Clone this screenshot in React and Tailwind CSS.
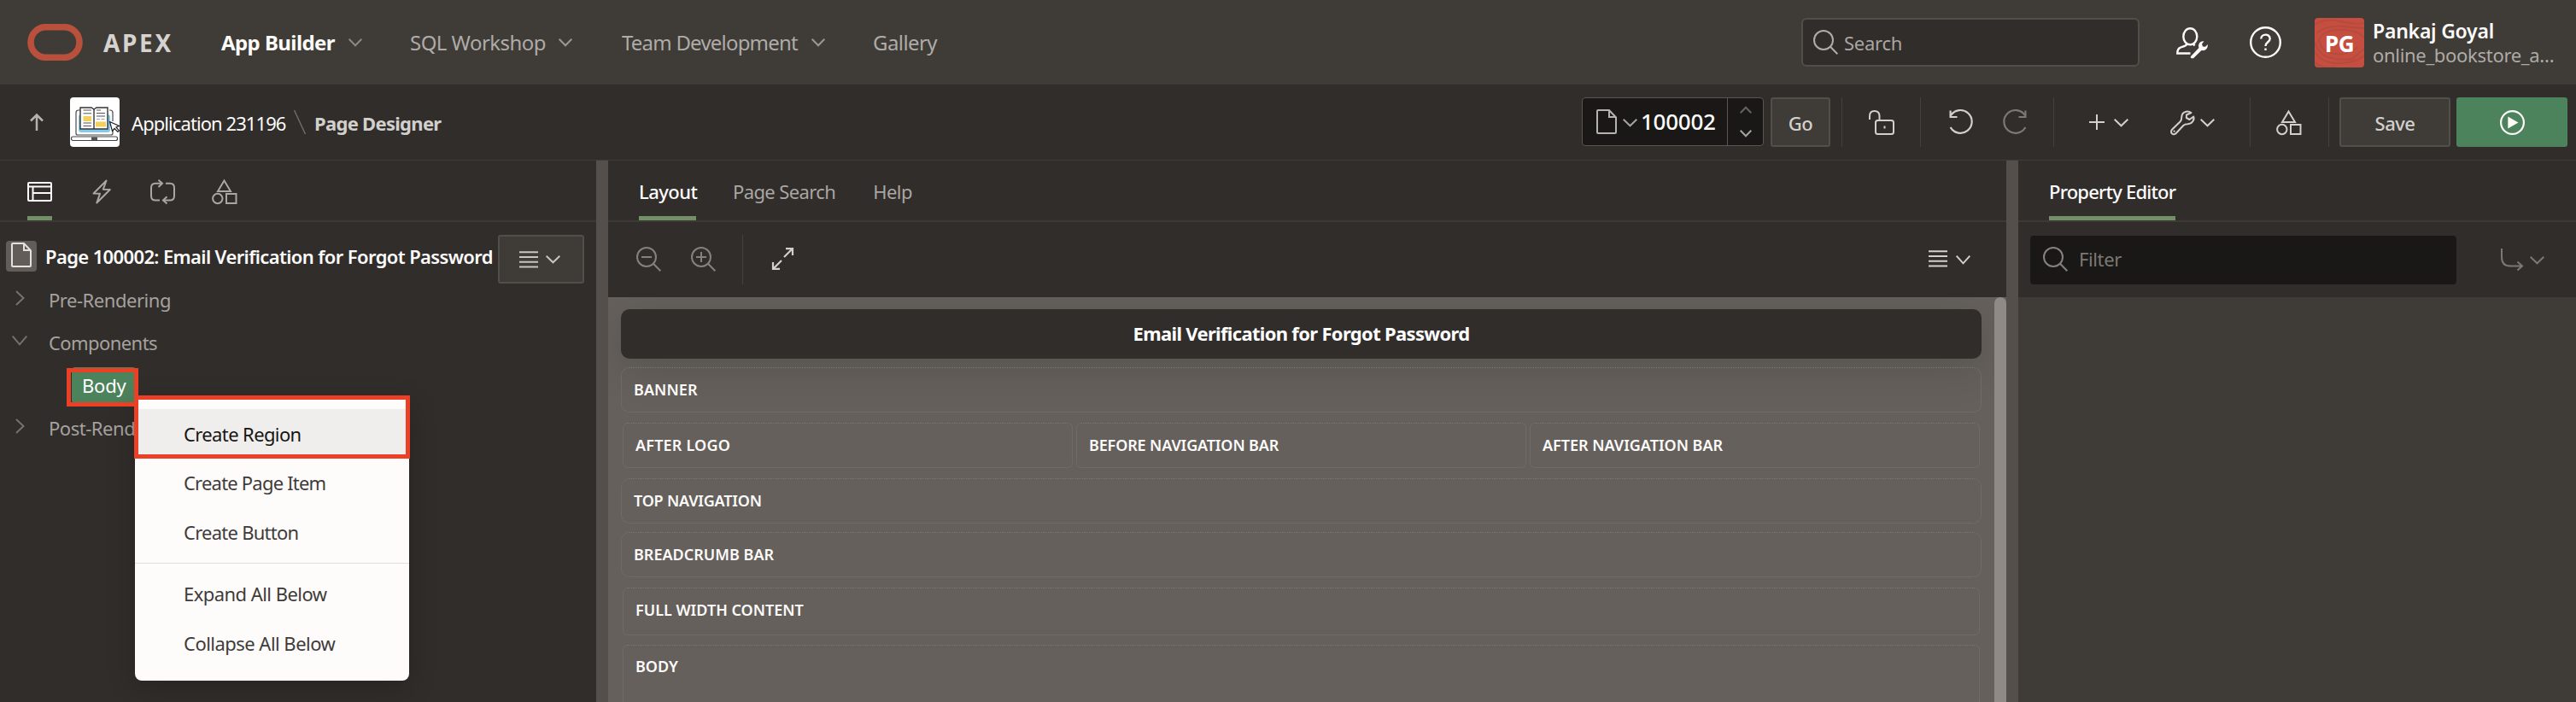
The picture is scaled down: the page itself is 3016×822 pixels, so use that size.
import React from "react";

function Icon({ w, h, sw = 2, className = "", children }) {
  return (
    <svg width={w} height={h} viewBox={`0 0 ${w} ${h}`} fill="none" stroke="currentColor" strokeWidth={sw} className={`block shrink-0 overflow-visible ${className}`}>
      {children}
    </svg>
  );
}

const ChevronDown = ({ w = 16, h = 9, sw = 2, className }) => (
  <Icon w={w} h={h} sw={sw} className={className}>
    <path d={`M0.7 0.7 L${w / 2} ${h - 0.7} L${w - 0.7} 0.7`} />
  </Icon>
);

const ChevronUp = ({ w = 14, h = 8, sw = 2, className }) => (
  <Icon w={w} h={h} sw={sw} className={className}>
    <path d={`M0.7 ${h - 0.7} L${w / 2} 0.7 L${w - 0.7} ${h - 0.7}`} />
  </Icon>
);

const ChevronRight = ({ className }) => (
  <Icon w={11} h={18} className={className}>
    <path d="M1 1 L9.5 9 L1 17" />
  </Icon>
);

const FileIcon = ({ className }) => (
  <Icon w={24} h={29} className={className}>
    <path d="M1 2 Q1 1 2 1 H15 L23 9.5 V27 Q23 28 22 28 H2 Q1 28 1 27 Z M15 1 V9 H23" />
  </Icon>
);

const SearchIcon = ({ className }) => (
  <Icon w={29} h={29} className={className}>
    <circle cx="12" cy="12" r="11" />
    <path d="M20 19.8 L28.3 28.3" />
  </Icon>
);

const ZoomIcon = ({ plus, className }) => (
  <Icon w={29} h={29} className={className}>
    <circle cx="12" cy="12" r="11" />
    <path d="M20 19.8 L28.3 28.3 M6 12 H18" />
    {plus && <path d="M12 6 V18" />}
  </Icon>
);

const ShapesIcon = ({ className }) => (
  <Icon w={30} h={29} className={className}>
    <path d="M14.5 1.5 L22 14 H7 Z" />
    <circle cx="6.8" cy="22.5" r="5.7" />
    <rect x="17" y="17" width="11.5" height="11" />
  </Icon>
);

const LinesIcon = ({ className }) => (
  <Icon w={22} h={20} className={className}>
    <path d="M0 1.3 H22 M0 7 H22 M0 12.8 H22 M0 18.6 H22" />
  </Icon>
);

const LayoutIcon = ({ className }) => (
  <Icon w={29} h={23} className={className}>
    <rect x="1" y="1" width="27" height="21" rx="1" />
    <path d="M1 5.5 H28 M6.5 5.5 V22 M6.5 13 H28" />
  </Icon>
);

const BoltIcon = ({ className }) => (
  <Icon w={22} h={29} className={className}>
    <path d="M16.5 1.5 L1.5 16.5 L9 16.8 L5.3 27.5 L20.8 12 L12.8 11.7 Z" strokeLinejoin="round" />
  </Icon>
);

const CycleIcon = ({ className }) => (
  <Icon w={29} h={29} className={className}>
    <path d="M14 4.8 H6 Q1 4.8 1 9.8 V19.5 Q1 24.5 6 24.5 H11 M18 4.8 H23 Q28 4.8 28 9.8 V19.5 Q28 24.5 23 24.5 H15.5" />
    <path d="M9.5 0.8 L14 4.8 L9.5 9 M19.5 20.3 L15 24.5 L19.5 28.5" />
  </Icon>
);

const LockIcon = ({ className }) => (
  <Icon w={30} h={29} className={className}>
    <rect x="8" y="12" width="21" height="16" rx="2.5" />
    <path d="M1 11 V7 Q1 1 6.500 1 Q12.500 1 12.500 7 V12 M18.500 18.500 V21.500" />
  </Icon>
);

const UndoIcon = ({ className }) => (
  <Icon w={28} h={29} sw={2.2} className={className}>
    <path d="M2 6.200 A13.400 13.400 0 1 1 1.600 20" />
    <path d="M1.600 0.500 V8 H9.500" />
  </Icon>
);

const PlusIcon = ({ className }) => (
  <Icon w={18} h={18} className={className}>
    <path d="M9 0 V18 M0 9 H18" />
  </Icon>
);

const WrenchIcon = ({ className }) => (
  <Icon w={29} h={29} className={className}>
    <path
      d="M24.500 3 C20 -0.200 13.500 2.200 13.300 8 C13.300 10.500 13 12 11.500 13.500 L2.200 22.500 C0.500 24.300 0.800 26.500 2 27.400 C3.300 28.600 5.500 28.300 6.800 27 L15.500 17.800 C17 16.400 18.500 16.200 20.500 16.200 C25.500 16 28.600 11.500 27.200 7.500 L22.500 11 L18.800 9 L19 5.500 Z"
      strokeLinejoin="round"
    />
    <circle cx="4.600" cy="24.700" r="0.500" strokeWidth="1.200" />
  </Icon>
);

const ExpandIcon = ({ className }) => (
  <Icon w={25} h={26} sw={2.2} className={className}>
    <path d="M14 11 L23.500 1.500 M16 1.200 H24 V9 M11 15 L1.500 24.500 M9 24.800 H1 V17" />
  </Icon>
);

const UserWrenchIcon = () => (
  <Icon w={37} h={36} sw={2.400}>
    <ellipse cx="16.300" cy="10.800" rx="8" ry="9.500" />
    <path d="M12.500 19.500 C11.500 22 8 22.500 5 23.600 C2.500 24.500 1.300 26 1.300 30.500 H16.500 M20 19.500 L21.500 21.500" />
    <path
      d="M17 34 L26.500 24 C25 19.500 28 15.800 32.500 16.300 L30 19.500 L31 22.500 L34 22.800 L36.800 20 C37.200 25 34 27.800 29.500 27 L20 36.200 C18 36.800 16 35.800 17 34 Z"
      fill="currentColor"
      stroke="none"
    />
  </Icon>
);

const BookArt = () => (
  <svg width="58" height="58" viewBox="0 0 58 58" className="block">
    <rect x="10" y="20" width="37" height="21" rx="3" fill="#85c9ec" />
    <path d="M12 15 H10 Q7 15 7 18 V42 Q7 44 9 44 H48 Q50 44 50 42 V37 M46 15 H47 Q50 15 50 18 V28" fill="none" stroke="#4a4a4a" strokeWidth="1.200" />
    <path d="M12 12 H25 L28 14 L31 12 H44 V37 H12 Z" fill="#fff" stroke="#333" strokeWidth="1.400" />
    <path d="M28 14 V37" stroke="#333" strokeWidth="1.400" />
    <rect x="15.500" y="22" width="9.500" height="6" fill="#f5cf5b" />
    <rect x="30" y="28.500" width="12" height="6" fill="#f5cf5b" />
    <path d="M15.500 15 H25 M15.500 18.800 H25 M15.500 30 H25 M15.500 33.500 H25 M31 15 H36 M31 18.500 H41 M31 22 H41" stroke="#555" strokeWidth="1" />
    <path d="M31 25.500 H41" stroke="#999" strokeWidth="0.900" strokeDasharray="4 1.500" />
    <path d="M46.500 28.500 L49.500 39.500 L52 36.500 L56 40.500 L57.500 39 L54 35 L57.500 33.500 Z" fill="#fff" stroke="#222" strokeWidth="1.200" />
    <rect x="1.500" y="46" width="54" height="4.500" rx="2" fill="#fff" stroke="#444" strokeWidth="1.200" />
    <rect x="25" y="46.500" width="7" height="3.500" fill="#555" />
  </svg>
);

const Divider = ({ className = "" }) => <div className={`h-[58px] w-px shrink-0 bg-[#45403b] ${className}`} />;

function TopNav() {
  return (
    <header className="flex h-[99px] shrink-0 items-center bg-[#3f3b36] text-[24px] text-[#aeaba8]">
      <svg width="65" height="43" viewBox="0 0 65 43" className="ml-8 block shrink-0">
        <rect x="4" y="3.600" width="57" height="35.800" rx="17.900" fill="none" stroke="#b8503c" strokeWidth="7.600" />
      </svg>
      <span className="ml-[24px] w-[138px] pt-px text-[28px] font-bold tracking-[0.095em] text-[#d5d3d0]">APEX</span>
      <span className="w-[149px] font-bold tracking-[-0.024em] text-[#fcfbfa]">App Builder</span>
      <ChevronDown className="text-[#8b8884]" />
      <span className="ml-[56px] w-[174px] tracking-[-0.022em]">SQL Workshop</span>
      <ChevronDown className="text-[#9b9894]" />
      <span className="ml-[58px] w-[222px] tracking-[-0.033em]">Team Development</span>
      <ChevronDown className="text-[#9b9894]" />
      <span className="ml-[56px] tracking-[-0.024em]">Gallery</span>
      <div className="ml-auto flex h-[57px] w-[396px] items-center rounded-[6px] border-2 border-[#524e4a] bg-[#312d2a] pl-3">
        <SearchIcon className="text-[#b0adaa]" />
        <span className="ml-[7px] pt-px text-[22px] tracking-[-0.012em] text-[#a9a6a3]">Search</span>
      </div>
      <div className="ml-[43px] text-[#fcfbfa]">
        <UserWrenchIcon />
      </div>
      <Icon w={37} h={37} sw={2.400} className="ml-[49px] text-[#fcfbfa]">
        <circle cx="18.500" cy="18.500" r="17.300" />
        <path d="M13.300 14.500 C13.300 8 23.700 8 23.700 14.300 C23.700 18.500 18.500 18 18.500 23" />
        <path d="M18.500 25.500 V28" />
      </Icon>
      <div className="relative ml-[39px] flex h-[58px] w-[58px] shrink-0 items-center justify-center overflow-hidden rounded-[4px] bg-[#c54f41]">
        <svg width="58" height="58" viewBox="0 0 58 58" className="absolute inset-0" fill="none" stroke="#ad4a3b" strokeWidth="1.800" opacity="0.7">
          <path d="M0 8 Q10 0 30 4 T58 6 M2 18 Q14 8 34 10 T58 12 M4 28 Q8 14 30 14 T58 24 M0 28 Q4 42 16 46 T44 48 L58 36 M0 40 Q10 54 30 53 T58 44 M6 26 Q6 40 24 42 T50 34 M0 52 Q10 60 24 58" />
        </svg>
        <span className="relative pt-[3px] text-[26px] font-bold tracking-[-0.019em] text-white">PG</span>
      </div>
      <div className="ml-[10px] flex w-[238px] flex-col text-[22px] leading-[28px]">
        <span className="text-[23px] font-semibold tracking-[-0.01em] text-[#fcfbfa]">Pankaj Goyal</span>
        <span className="tracking-[-0.014em]">online_bookstore_a…</span>
      </div>
    </header>
  );
}

function ActionBar() {
  return (
    <div className="flex h-[89px] shrink-0 items-center border-b border-[#403c37] pr-[10px] text-[22px] text-[#d2d0cd]">
      <Icon w={16} h={20} sw={2.500} className="ml-[35px] text-[#b5b2af]">
        <path d="M8 20 V1.500 M1 8.500 L8 1.500 L15 8.500" />
      </Icon>
      <div className="ml-[31px] h-[58px] w-[58px] shrink-0 overflow-hidden rounded-[4px] bg-white">
        <BookArt />
      </div>
      <span className="ml-[14px] w-[190px] pt-[2px] tracking-[-0.042em] text-[#fcfbfa]">Application 231196</span>
      <Icon w={14} h={28} sw={1.500} className="text-[#6f6b67]">
        <path d="M0.500 0 L13.500 28" />
      </Icon>
      <span className="ml-[10px] pt-[2px] font-bold tracking-[-0.032em]">Page Designer</span>

      <div className="mb-px ml-auto flex h-[57px] w-[213px] items-center rounded-[4px] border border-[#595550] bg-[#191816]">
        <FileIcon className="ml-4 text-[#b5b2af]" />
        <ChevronDown w={17} h={9} className="ml-[7px] mt-px text-[#a5a29f]" />
        <span className="ml-1 w-[101px] text-[26px] font-medium tracking-[-0.01em] text-[#fcfbfa]">100002</span>
        <div className="flex h-full flex-1 flex-col items-center justify-between border-l border-[#595550] py-[10px]">
          <ChevronUp className="text-[#66625e]" />
          <ChevronDown w={14} h={8} className="text-[#a5a29f]" />
        </div>
      </div>
      <div className="ml-2 flex h-[58px] w-[70px] items-center justify-center rounded-[3px] border-2 border-[#524e4a] bg-[#3f3b36] pt-[3px] font-medium tracking-[-0.021em]">Go</div>
      <Divider className="ml-[13px]" />
      <LockIcon className="ml-[31px]" />
      <Divider className="ml-[30px]" />
      <UndoIcon className="ml-[33px]" />
      <UndoIcon className="ml-[35px] -scale-x-100 text-[#7c7874]" />
      <Divider className="ml-[31px]" />
      <PlusIcon className="ml-[41px]" />
      <ChevronDown w={17} h={9} className="ml-[11px] mt-px" />
      <WrenchIcon className="ml-[49px]" />
      <ChevronDown w={17} h={9} className="ml-[6px] mt-px" />
      <Divider className="ml-[41px]" />
      <ShapesIcon className="ml-[30px]" />
      <Divider className="ml-[31px]" />
      <div className="ml-[12px] flex h-[58px] w-[130px] items-center justify-center rounded-[3px] border-2 border-[#524e4a] bg-[#3f3b36] pt-[3px] font-medium tracking-[-0.024em]">Save</div>
      <div className="ml-[7px] flex h-[58px] w-[130px] items-center justify-center rounded-[3px] bg-[#4c825c] text-[#fcfbfa]">
        <Icon w={29} h={29} sw={2.200}>
          <circle cx="14.500" cy="14.500" r="13.400" />
          <path d="M9.300 7.500 V21.500 L21.500 14.500 Z" fill="currentColor" stroke="none" />
        </Icon>
      </div>
    </div>
  );
}

const Tab = ({ active, className = "", children }) => (
  <div className={`flex h-[70px] flex-col justify-between ${active ? "text-[#fcfbfa]" : "text-[#a9a6a3]"} ${className}`}>
    <div className="flex h-[65px] items-center justify-center pt-[7px]">{children}</div>
    <div className={`h-[5px] ${active ? "bg-[#738f67]" : ""}`} />
  </div>
);

const TreeRow = ({ icon, label, className = "" }) => (
  <div className="flex h-[50px] items-center">
    <div className="mb-[5px] flex w-[46px] justify-center text-[#76726e]">{icon}</div>
    <span className={`ml-[11px] whitespace-nowrap text-[#a5a29f] ${className}`}>{label}</span>
  </div>
);

function TreePanel() {
  return (
    <aside className="relative flex w-[698px] shrink-0 flex-col text-[22px]">
      <div className="flex h-[72px] shrink-0 border-b-2 border-[#3d3935] pl-8">
        <Tab active><LayoutIcon /></Tab>
        <Tab className="ml-[47px]"><BoltIcon /></Tab>
        <Tab className="ml-[46px]"><CycleIcon /></Tab>
        <Tab className="ml-[43px]"><ShapesIcon /></Tab>
      </div>
      <div className="mt-[15px] flex h-[57px] shrink-0 items-center pl-[7px]">
        <div className="mb-[7px] flex h-9 w-9 shrink-0 justify-center rounded-[4px] bg-[#625d59] pt-[2px] text-[#e4e2e0]">
          <FileIcon />
        </div>
        <span className="mb-[7px] ml-[10px] w-[530px] whitespace-nowrap font-semibold tracking-[-0.0285em] text-[#fcfbfa]">
          Page 100002: Email Verification for Forgot Password
        </span>
        <div className="flex h-[57px] w-[101px] items-center rounded-[3px] border-2 border-[#524e4a] bg-[#3f3b36] pl-[23px] text-[#c7c5c2]">
          <LinesIcon />
          <ChevronDown w={17} h={9} className="ml-[9px]" />
        </div>
      </div>
      <div className="-mt-[6px] flex flex-col">
        <TreeRow icon={<ChevronRight />} label="Pre-Rendering" className="tracking-[-0.021em]" />
        <TreeRow icon={<ChevronDown w={18} h={11} />} label="Components" className="tracking-[-0.026em]" />
        <div className="flex h-[50px] items-center pl-[84px]">
          <div className="flex h-[43px] w-[75px] items-center rounded-[4px] bg-[#4c825c] pl-3 pt-px tracking-[-0.01em] text-white">Body</div>
        </div>
        <TreeRow icon={<ChevronRight />} label="Post-Rendering" className="tracking-[-0.021em]" />
      </div>
      <ContextMenu />
      <div className="absolute left-[78px] top-[243px] h-[45px] w-[84px] border-[5px] border-[#eb4025]" />
      <div className="absolute left-[157px] top-[275px] h-[74px] w-[323px] border-[5px] border-[#eb4025]" />
    </aside>
  );
}

function ContextMenu() {
  return (
    <div className="absolute left-[158px] top-[276px] flex h-[333px] w-[321px] flex-col rounded-[8px] bg-[#fdfcfa] pt-[15px] text-[#3f3b3a] shadow-[0_8px_32px_rgba(0,0,0,0.22)]">
      <div className="flex h-[58px] items-center bg-[#efeeec] pl-[57px] tracking-[-0.028em] text-[#161513]">Create Region</div>
      <div className="flex h-[57px] items-center pl-[57px] tracking-[-0.036em]">Create Page Item</div>
      <div className="flex h-[58px] items-center pl-[57px] tracking-[-0.034em]">Create Button</div>
      <div className="my-[7px] h-px shrink-0 bg-[#e1dfdd]" />
      <div className="flex h-[57px] items-center pl-[57px] tracking-[-0.025em]">Expand All Below</div>
      <div className="flex h-[58px] items-center pl-[57px] tracking-[-0.024em]">Collapse All Below</div>
    </div>
  );
}

const Slot = ({ className, children }) => (
  <div className={`flex items-center border border-dotted border-[#7b7671] pl-[14px] text-[18px] font-semibold text-[#fcfbfa] ${className}`}>{children}</div>
);

function LayoutPanel() {
  return (
    <main className="flex w-[1637px] shrink-0 flex-col text-[22px]">
      <div className="flex h-[72px] shrink-0 border-b-2 border-[#3d3935] pl-9">
        <Tab active><span className="w-[67px] font-medium tracking-[-0.025em]">Layout</span></Tab>
        <Tab className="ml-[43px]"><span className="tracking-[-0.028em]">Page Search</span></Tab>
        <Tab className="ml-[44px]"><span className="tracking-[-0.024em]">Help</span></Tab>
      </div>
      <div className="flex h-[88px] shrink-0 items-center pl-[33px] pr-[42px] text-[#d2d0cd]">
        <ZoomIcon className="mb-[2px] text-[#85817d]" />
        <ZoomIcon plus className="mb-[2px] ml-[35px] text-[#85817d]" />
        <Divider className="ml-[31px]" />
        <ExpandIcon className="mb-[2px] ml-[34px]" />
        <LinesIcon className="mb-[2px] ml-auto" />
        <ChevronDown w={17} h={10} className="ml-[10px]" />
      </div>
      <div className="flex flex-1 bg-[#65605b]">
        <div className="flex flex-1 flex-col overflow-hidden pl-[15px] pr-[15px] pt-[14px]">
          <div className="flex h-[58px] shrink-0 items-center justify-center rounded-[10px] bg-[#312d2a] pb-px font-bold tracking-[-0.031em] text-white shadow-[0_12px_48px_rgba(0,0,0,0.14)]">
            Email Verification for Forgot Password
          </div>
          <Slot className="mt-[10px] h-[53px] shrink-0 rounded-[10px] tracking-[0.004em]">BANNER</Slot>
          <div className="mt-[12px] grid shrink-0 grid-cols-3 gap-1 px-[2px]">
            <Slot className="h-[53px] rounded-[6px] tracking-[0.010em]">AFTER LOGO</Slot>
            <Slot className="h-[53px] rounded-[6px] tracking-[-0.008em]">BEFORE NAVIGATION BAR</Slot>
            <Slot className="h-[53px] rounded-[6px] tracking-[-0.001em]">AFTER NAVIGATION BAR</Slot>
          </div>
          <Slot className="mt-[12px] h-[53px] shrink-0 rounded-[10px] tracking-[-0.012em]">TOP NAVIGATION</Slot>
          <Slot className="mt-[10px] h-[53px] shrink-0 rounded-[10px]">BREADCRUMB BAR</Slot>
          <Slot className="mx-[2px] mt-[12px] h-[56px] shrink-0 rounded-[6px] pb-[3px]">FULL WIDTH CONTENT</Slot>
          <Slot className="mx-[2px] -mb-[20px] mt-[11px] h-[87px] shrink-0 rounded-[6px] pb-[37px]">BODY</Slot>
        </div>
        <div className="w-[14px] rounded-t-[7px] bg-[#8f8a86]" />
      </div>
    </main>
  );
}

function PropertyPanel() {
  return (
    <aside className="flex flex-1 flex-col bg-[#3f3b36] text-[22px]">
      <div className="flex h-[72px] shrink-0 border-b-2 border-[#3d3935] bg-[#312d2a] pl-9">
        <Tab active><span className="w-[148px] whitespace-nowrap font-medium tracking-[-0.036em]">Property Editor</span></Tab>
      </div>
      <div className="flex h-[88px] shrink-0 items-center bg-[#312d2a] pl-[14px] text-[#7c7874]">
        <div className="flex h-[57px] w-[499px] items-center rounded-[4px] bg-[#191816] pl-[15px]">
          <SearchIcon className="mb-[2px] text-[#85817d]" />
          <span className="mb-px ml-[13px] tracking-[-0.018em]">Filter</span>
        </div>
        <Icon w={26} h={26} className="ml-[52px]">
          <path d="M1 0 V10 Q1 20.500 11 20.500 H25 M19.500 15.500 L25 20.500 L19.500 25.500" />
        </Icon>
        <ChevronDown w={17} h={9} className="ml-[8px]" />
      </div>
    </aside>
  );
}

export default function App() {
  return (
    <div className="flex h-[822px] w-[3016px] flex-col overflow-hidden bg-[#312d2a] font-['Noto_Sans','Open_Sans',sans-serif]">
      <TopNav />
      <ActionBar />
      <div className="flex h-[634px]">
        <TreePanel />
        <div className="w-[14px] shrink-0 bg-[#544f4a]" />
        <LayoutPanel />
        <div className="w-[14px] shrink-0 bg-[#544f4a]" />
        <PropertyPanel />
      </div>
    </div>
  );
}
